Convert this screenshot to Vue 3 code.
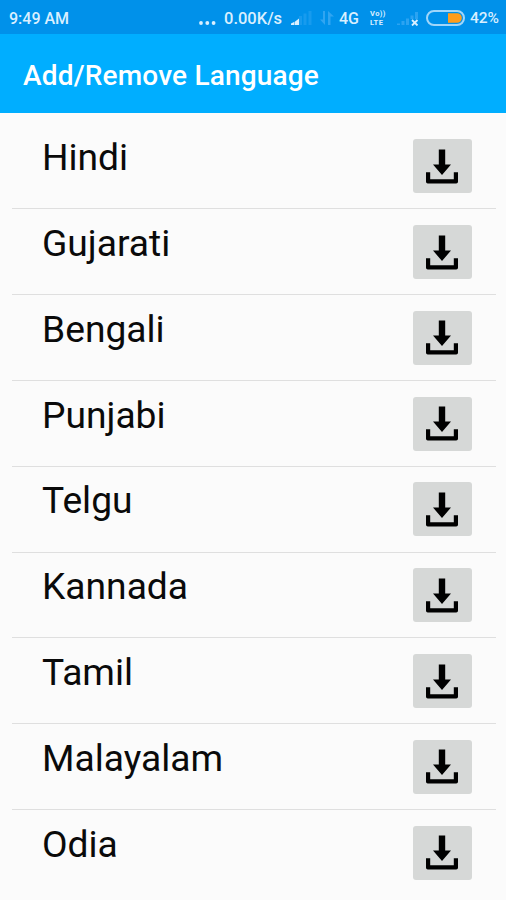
<template>
  <div class="screen">
    <div class="status-bar">
      <span class="time">9:49 AM</span>
      <div class="status-right">
        <svg class="dots" width="17" height="4" viewBox="0 0 17 4">
          <circle cx="2" cy="2" r="1.9" />
          <circle cx="8.3" cy="2" r="1.9" />
          <circle cx="14.6" cy="2" r="1.9" />
        </svg>
        <span class="speed">0.00K/s</span>
        <svg class="signal" width="22" height="15" viewBox="0 0 22 15">
          <path d="M9.5 6V15M14 3.5V15M19 1V15" stroke="#179bee" stroke-width="3" fill="none" />
          <path d="M0 15V13.5L3 12V15ZM3.5 15V12L8 8.5V15Z" fill="#d9efff" />
        </svg>
        <svg class="transfer" width="14" height="14" viewBox="0 0 14 14">
          <path d="M5 0V14L0 8.5H3V0ZM8 0L14 5.5H10.5V14H8Z" fill="#30a5f1" />
        </svg>
        <span class="network">4G</span>
        <span class="volte">Vo))<br>LTE</span>
        <svg class="no-signal" width="22" height="15" viewBox="0 0 22 15">
          <path d="M1.5 12.5V14M6 10V14M10.5 7.5V14M15 4.5V8M19.5 1V8" stroke="#2ba3f1" stroke-width="3" fill="none" />
          <path d="M15 9L20.5 14.5M20.5 9L15 14.5" stroke="#d9efff" stroke-width="1.8" />
        </svg>
        <svg class="battery" width="39" height="16" viewBox="0 0 39 16">
          <rect x="1" y="1" width="37" height="14" rx="7" fill="none" stroke="#a0d6fa" stroke-width="2" />
          <path d="M22 3.2H31A4.8 4.8 0 0 1 31 12.8H22Z" fill="#ff9d1c" />
        </svg>
        <span class="percent">42%</span>
      </div>
    </div>

    <div class="app-bar">
      <h1 class="title">Add/Remove Language</h1>
    </div>

    <div class="language-list">
      <div v-for="language in languages" :key="language" class="language-row">
        <span class="language-name">{{ language }}</span>
        <button class="download-btn" :aria-label="'Download ' + language" @click="download(language)">
          <svg width="32" height="35" viewBox="0 0 32 35">
            <path d="M12.8 0.5H19.2V15.5H25L16 26L7 15.5H12.8Z" />
            <path d="M0 23.3H4.2V30.3H27.8V23.3H32V32.8Q32 34.6 30.2 34.6H1.8Q0 34.6 0 32.8Z" />
          </svg>
        </button>
      </div>
    </div>
  </div>
</template>

<script setup>
import { ref } from 'vue'

const languages = ref([
  'Hindi',
  'Gujarati',
  'Bengali',
  'Punjabi',
  'Telgu',
  'Kannada',
  'Tamil',
  'Malayalam',
  'Odia'
])

const download = (language) => {
  console.log('Download language:', language)
}
</script>

<style>
body {
  margin: 0;
  background: #fbfbfb;
}
</style>

<style scoped>
.screen {
  width: 506px;
  height: 900px;
  overflow: hidden;
  background: #fbfbfb;
  font-family: Roboto, "Liberation Sans", sans-serif;
}

.status-bar {
  display: flex;
  justify-content: space-between;
  height: 34px;
  padding: 0 8px 0 9px;
  box-sizing: border-box;
  background: #0091ea;
  color: #d9efff;
  font-size: 16px;
  font-weight: 500;
  line-height: 37px;
  white-space: nowrap;
}

.status-right {
  display: flex;
}

.status-right svg {
  flex-shrink: 0;
}

.dots {
  margin: 21px 8px 0 0;
  fill: #d9efff;
}

.speed {
  width: 57px;
  font-size: 16.5px;
}

.signal {
  margin: 10px 0 0 10px;
}

.transfer {
  margin: 11px 0 0 7px;
}

.network {
  width: 21px;
  margin-left: 5px;
}

.volte {
  width: 18px;
  margin: 9px 0 0 10px;
  font-size: 7.5px;
  font-weight: 700;
  letter-spacing: 0.4px;
  line-height: 9px;
}

.no-signal {
  margin: 11px 0 0 9px;
}

.battery {
  margin: 10px 0 0 7px;
}

.percent {
  width: 28px;
  margin-left: 5px;
  font-size: 15.5px;
}

.app-bar {
  display: flex;
  align-items: center;
  height: 79px;
  padding: 5px 23px 0;
  box-sizing: border-box;
  background: #00aeff;
}

.title {
  margin: 0;
  color: #ffffff;
  font-size: 28px;
  font-weight: 500;
  letter-spacing: 0.18px;
  line-height: 32px;
}

.language-list {
  padding: 10.5px 10px 0 12px;
}

.language-row {
  display: flex;
  justify-content: space-between;
  align-items: flex-start;
  height: 85.82px;
  padding: 11.7px 24.5px 0 30px;
  box-sizing: border-box;
  border-bottom: 1.5px solid #dfdfdf;
}

.language-row:last-child {
  border-bottom: none;
}

.language-name {
  color: #0a0a0a;
  font-size: 37.2px;
  line-height: 44px;
}

.download-btn {
  display: flex;
  align-items: center;
  justify-content: center;
  width: 59px;
  height: 54px;
  margin-top: 4px;
  padding: 0;
  border: none;
  border-radius: 3px;
  background: #d6d8d7;
  cursor: pointer;
}
</style>
